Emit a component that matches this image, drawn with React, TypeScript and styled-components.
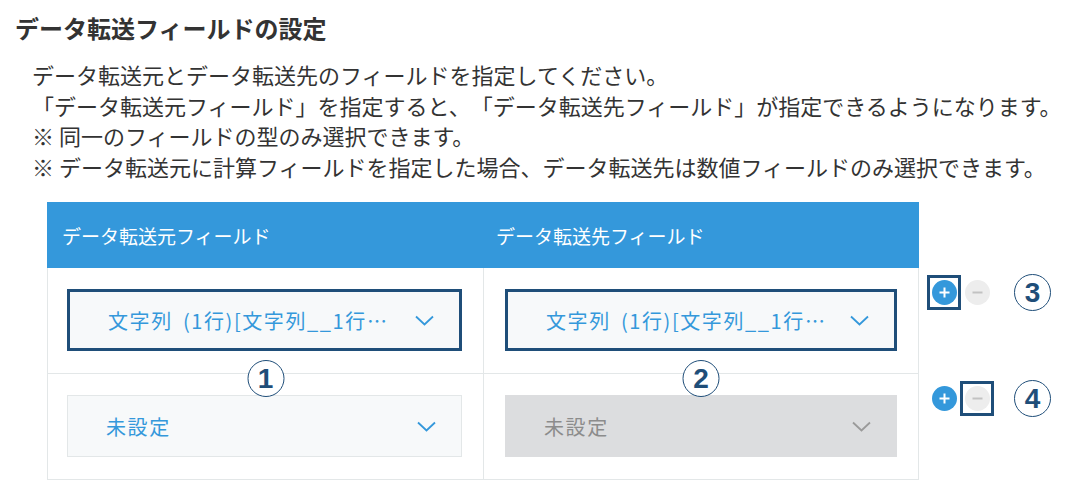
import React from 'react';
import styled, { createGlobalStyle } from 'styled-components';

const GlobalStyle = createGlobalStyle`
    body {
        margin: 0;
        background: #ffffff;
        font-family: "Noto Sans CJK JP", "Noto Sans", sans-serif;
        color: #333333;
        text-spacing-trim: space-all;
    }
`;

const Page = styled.div`
    padding: 10px 0 0 15px;
`;

const Title = styled.h2`
    margin: 0;
    font-size: 24px;
    line-height: 36px;
    font-weight: bold;
    color: #333333;
`;

const Description = styled.div`
    margin: 13px 0 0 17px;
    font-size: 22px;
    line-height: 30.5px;
    color: #333333;
`;

const Line = styled.p`
    margin: 0;
    white-space: nowrap;
`;

const FieldTable = styled.div`
    margin: 21px 0 0 32px;
    display: flex;
    flex-direction: column;
`;

const Row = styled.div`
    display: flex;
`;

const HeaderCell = styled.div<{ $first?: boolean }>`
    box-sizing: border-box;
    flex-shrink: 0;
    width: ${(p) => (p.$first ? '437px' : '435px')};
    height: 66px;
    padding-left: ${(p) => (p.$first ? '15px' : '12px')};
    display: flex;
    align-items: center;
    background: #3498db;
    color: #ffffff;
    font-size: 19px;
`;

const Cell = styled.div<{ $first?: boolean }>`
    position: relative;
    box-sizing: border-box;
    flex-shrink: 0;
    width: ${(p) => (p.$first ? '437px' : '435px')};
    padding: 21px 21px 22px ${(p) => (p.$first ? '19px' : '21px')};
    border-right: 1px solid #e3e7e8;
    border-bottom: 1px solid #e3e7e8;
    border-left: ${(p) => (p.$first ? '1px solid #e3e7e8' : 'none')};
`;

const SelectBox = styled.div<{ $marked?: boolean; $disabled?: boolean }>`
    box-sizing: border-box;
    height: 62px;
    display: flex;
    align-items: center;
    justify-content: space-between;
    padding: 0 25px 0 38px;
    border: ${(p) => (p.$marked ? '3px solid #1f4e79' : p.$disabled ? '1px solid #dcdddf' : '1px solid #e3e7e8')};
    background: ${(p) => (p.$disabled ? '#dcdddf' : '#f7f9fa')};
    color: ${(p) => (p.$disabled ? '#8c8c8c' : '#3498db')};
    font-size: 20px;
    white-space: nowrap;
`;

const SelectLabel = styled.span`
    letter-spacing: 1.6px;
    word-spacing: 4px;
`;

const Chevron = ({ color }: { color: string }) => (
    <svg width="19" height="11" viewBox="0 0 19 11">
        <path d="M1 1.5 L9.5 9.5 L18 1.5" fill="none" stroke={color} strokeWidth="1.8" />
    </svg>
);

const Actions = styled.div`
    flex-shrink: 0;
    display: flex;
    align-items: center;
    align-self: flex-start;
    height: 35px;
    margin: 7px 0 0 8px;
`;

const ButtonFrame = styled.div<{ $marked?: boolean }>`
    box-sizing: border-box;
    flex-shrink: 0;
    width: 34px;
    height: 35px;
    margin-right: -1px;
    display: flex;
    align-items: center;
    justify-content: center;
    border: 3px solid ${(p) => (p.$marked ? '#1f4e79' : 'transparent')};
`;

const RoundButton = styled.button<{ $kind: 'add' | 'remove' }>`
    box-sizing: border-box;
    flex: 0 0 25px;
    width: 25px;
    height: 25px;
    min-width: 25px;
    padding: 0;
    border: none;
    border-radius: 50%;
    display: flex;
    align-items: center;
    justify-content: center;
    background: ${(p) => (p.$kind === 'add' ? '#3498db' : '#ededed')};
    cursor: pointer;
`;

const Marker = styled.span<{ $overlay?: boolean }>`
    box-sizing: border-box;
    flex-shrink: 0;
    width: 37px;
    height: 37px;
    border: 1.5px solid #1f4e79;
    border-radius: 50%;
    display: inline-flex;
    align-items: center;
    justify-content: center;
    background: #ffffff;
    color: #1f4e79;
    font-family: "Liberation Sans", Arial, sans-serif;
    font-weight: bold;
    font-size: 28px;
    line-height: 1;
    ${(p) =>
        p.$overlay
            ? `
        position: absolute;
        top: -14px;
        left: 50%;
        transform: translateX(-50%);
    `
            : `
        margin-left: 21px;
    `}
`;

const PlusIcon = () => (
    <svg width="13" height="13" viewBox="0 0 13 13">
        <path d="M6.5 1.5 V11.5 M1.5 6.5 H11.5" stroke="#ffffff" strokeWidth="2" />
    </svg>
);

const MinusIcon = () => (
    <svg width="13" height="13" viewBox="0 0 13 13">
        <path d="M1.5 6.5 H11.5" stroke="#c2c2c2" strokeWidth="2" />
    </svg>
);

const App = () => {
    return (
        <Page>
            <GlobalStyle />
            <Title>データ転送フィールドの設定</Title>
            <Description>
                <Line>データ転送元とデータ転送先のフィールドを指定してください。</Line>
                <Line>「データ転送元フィールド」を指定すると、「データ転送先フィールド」が指定できるようになります。</Line>
                <Line>※ 同一のフィールドの型のみ選択できます。</Line>
                <Line>※ データ転送元に計算フィールドを指定した場合、データ転送先は数値フィールドのみ選択できます。</Line>
            </Description>
            <FieldTable>
                <Row>
                    <HeaderCell $first>データ転送元フィールド</HeaderCell>
                    <HeaderCell>データ転送先フィールド</HeaderCell>
                </Row>
                <Row>
                    <Cell $first>
                        <SelectBox $marked>
                            <SelectLabel>文字列 (1行)[文字列__1行…</SelectLabel>
                            <Chevron color="#3498db" />
                        </SelectBox>
                    </Cell>
                    <Cell>
                        <SelectBox $marked>
                            <SelectLabel>文字列 (1行)[文字列__1行…</SelectLabel>
                            <Chevron color="#3498db" />
                        </SelectBox>
                    </Cell>
                    <Actions>
                        <ButtonFrame $marked><RoundButton $kind="add"><PlusIcon /></RoundButton></ButtonFrame>
                        <ButtonFrame><RoundButton $kind="remove"><MinusIcon /></RoundButton></ButtonFrame>
                        <Marker>3</Marker>
                    </Actions>
                </Row>
                <Row>
                    <Cell $first>
                        <Marker $overlay>1</Marker>
                        <SelectBox>
                            <SelectLabel>未設定</SelectLabel>
                            <Chevron color="#3498db" />
                        </SelectBox>
                    </Cell>
                    <Cell>
                        <Marker $overlay>2</Marker>
                        <SelectBox $disabled>
                            <SelectLabel>未設定</SelectLabel>
                            <Chevron color="#9a9a9a" />
                        </SelectBox>
                    </Cell>
                    <Actions>
                        <ButtonFrame><RoundButton $kind="add"><PlusIcon /></RoundButton></ButtonFrame>
                        <ButtonFrame $marked><RoundButton $kind="remove"><MinusIcon /></RoundButton></ButtonFrame>
                        <Marker>4</Marker>
                    </Actions>
                </Row>
            </FieldTable>
        </Page>
    );
};

export default App;
